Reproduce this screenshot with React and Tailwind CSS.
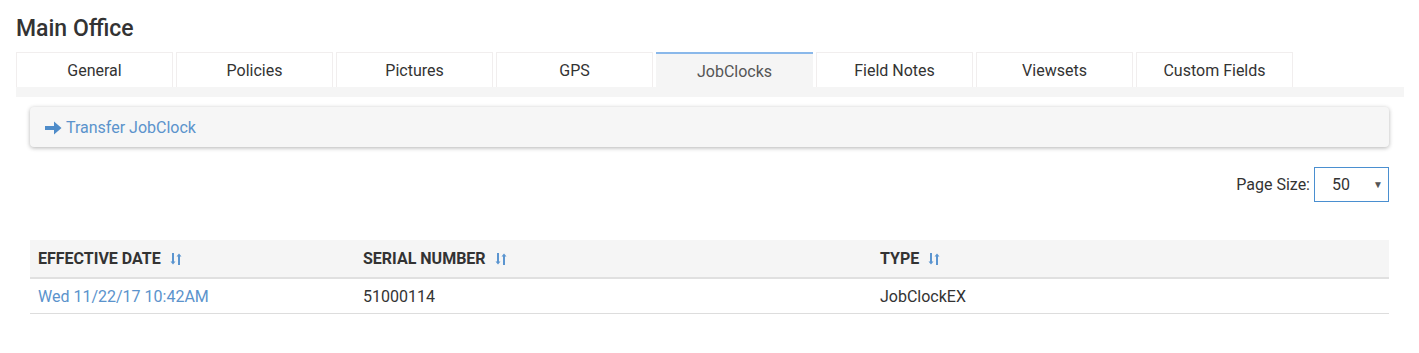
import React from "react";

const TABS = ["General", "Policies", "Pictures", "GPS", "JobClocks", "Field Notes", "Viewsets", "Custom Fields"];

const SortIcon = () => (
  <svg width="12" height="14" viewBox="0 0 12 14" className="ml-[9px] inline-block">
    <path d="M3 1v9" stroke="#5b95d0" strokeWidth="2" />
    <path d="M0.5 9.5h5L3 12.5z" fill="#5b95d0" />
    <path d="M9 13V4" stroke="#5b95d0" strokeWidth="2" />
    <path d="M6.5 4.5h5L9 1.5z" fill="#5b95d0" />
  </svg>
);

const App = () => {
  return (
    <div className="w-[1419px] h-[353px] bg-white text-[#333] pl-4 pr-[15px]" style={{ fontFamily: "Roboto, 'Liberation Sans', sans-serif" }}>
      <h1 className="pt-[15px] h-[52px] text-[23px] leading-[28px] font-medium text-[#333]">Main Office</h1>
      <div className="flex gap-[3px]">
        {TABS.map((t) => {
          const active = t === "JobClocks";
          return (
            <div
              key={t}
              className={
                active
                  ? "w-[157px] h-[35px] flex items-center justify-center pt-[2px] text-[16px] text-[#555] bg-[#f5f5f5] border-t-2 border-[#8ab8ea]"
                  : "w-[157px] h-[35px] flex items-center justify-center pt-[2px] text-[16px] text-[#333] bg-white border border-b-0 border-[#f1eeee]"
              }
            >
              {t}
            </div>
          );
        })}
      </div>
      <div className="h-[10px] bg-[#f5f5f5]"></div>
      <div className="pl-[14px] pr-[15px] pt-[10px]">
        <div className="h-[40px] bg-[#f6f6f6] rounded-[4px] shadow-[0_1px_4px_rgba(0,0,0,0.3)] flex items-center pl-[15px] pt-[1px] text-[16px] text-[#5b93cc]">
          <svg width="17" height="14" viewBox="0 0 17 14" className="mr-[4px]">
            <path d="M0 5h9V0.5L16.5 7 9 13.5V9H0z" fill="#4f8cc9" />
          </svg>
          Transfer JobClock
        </div>
        <div className="flex justify-end items-center mt-[20px]">
          <span className="text-[16px] text-[#333] mr-[4px]">Page Size:</span>
          <div className="w-[75px] h-[35px] border border-[#4a8fd0] flex items-center justify-between pl-[17px] pr-[5px] text-[16px] text-[#333]">
            <span>50</span>
            <span className="text-[10px] text-[#555]">▼</span>
          </div>
        </div>
        <table className="w-full mt-[38px] text-[16px] border-collapse">
          <thead>
            <tr className="bg-[#f5f5f5] h-[38px] border-b-2 border-[#e0e0e0]">
              <th className="w-[325px] text-left font-bold pl-2 uppercase text-[#333]">
                <span className="inline-flex items-center">Effective Date<SortIcon /></span>
              </th>
              <th className="w-[517px] text-left font-bold pl-2 uppercase text-[#333]">
                <span className="inline-flex items-center">Serial Number<SortIcon /></span>
              </th>
              <th className="text-left font-bold pl-2 uppercase text-[#333]">
                <span className="inline-flex items-center">Type<SortIcon /></span>
              </th>
            </tr>
          </thead>
          <tbody>
            <tr className="h-[35px] border-b border-[#ddd]">
              <td className="pl-2 pt-[2px] text-[#5b93cc]">Wed 11/22/17 10:42AM</td>
              <td className="pl-2 pt-[2px] text-[#333]">51000114</td>
              <td className="pl-2 pt-[2px] text-[#333]">JobClockEX</td>
            </tr>
          </tbody>
        </table>
      </div>
    </div>
  );
};

export default App;
